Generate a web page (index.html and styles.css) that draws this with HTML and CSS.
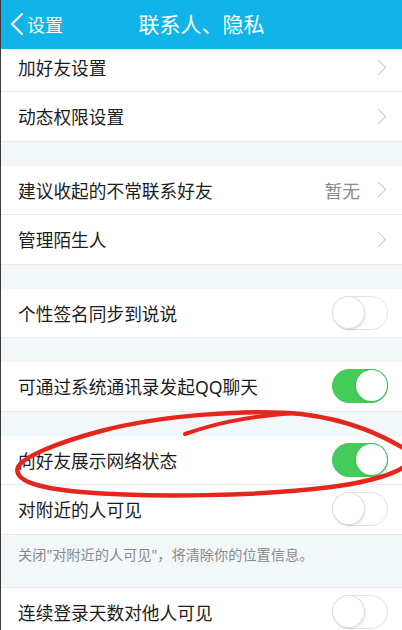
FILE: index.html
```html
<!DOCTYPE html>
<html lang="zh-CN">
<head>
<meta charset="utf-8">
<title>联系人、隐私</title>
<link rel="stylesheet" href="styles.css">
</head>
<body>
<div class="page">
  <header class="navbar">
    <div class="back">
      <svg class="back-icon" width="14" height="22" viewBox="0 0 14 22"><path d="M12 1 L2 11 L12 21" fill="none" stroke="#fff" stroke-width="2.2" stroke-linecap="round" stroke-linejoin="round"/></svg>
      <span>设置</span>
    </div>
    <div class="title">联系人、隐私</div>
  </header>

  <div class="list">
    <div class="row row-partial"><span class="label">加好友设置</span><span class="chev"></span></div>
    <div class="row"><span class="label">动态权限设置</span><span class="chev"></span></div>
    <div class="gap"></div>
    <div class="row"><span class="label">建议收起的不常联系好友</span><span class="value">暂无</span><span class="chev"></span></div>
    <div class="row"><span class="label">管理陌生人</span><span class="chev"></span></div>
    <div class="gap"></div>
    <div class="row"><span class="label">个性签名同步到说说</span><span class="switch"></span></div>
    <div class="gap"></div>
    <div class="row"><span class="label">可通过系统通讯录发起QQ聊天</span><span class="switch on"></span></div>
    <div class="gap"></div>
    <div class="row"><span class="label">向好友展示网络状态</span><span class="switch on"></span></div>
    <div class="row"><span class="label">对附近的人可见</span><span class="switch"></span></div>
    <div class="note">关闭"对附近的人可见"，将清除你的位置信息。</div>
    <div class="row"><span class="label">连续登录天数对他人可见</span><span class="switch"></span></div>
  </div>

  <svg class="scribble" width="402" height="630" viewBox="0 0 402 630">
    <path d="M 404 449 C 382 436, 350 420, 300 414 C 250 409, 160 415, 100 431 C 55 443, 22 457, 17 467 C 12 480, 35 488, 80 492 C 150 498, 260 496, 330 487 C 370 482, 395 473, 404 466" fill="none" stroke="#e5261c" stroke-width="4.5" stroke-linecap="round"/>
    <path d="M 184 434 C 210 425, 240 417, 292 413" fill="none" stroke="#e5261c" stroke-width="4" stroke-linecap="round"/>
  </svg>
</div>
</body>
</html>
```
FILE: styles.css
```css
* { box-sizing: border-box; }
html, body { margin: 0; padding: 0; }
body {
  background: #f2f7fa;
  font-family: "Noto Sans", "Noto Sans CJK SC", sans-serif;
  color: #1c1c1c;
}
.page {
  position: relative;
  width: 402px;
  height: 630px;
  overflow: hidden;
  background: #f2f7fa;
  border-left: 1px solid #3a3a3a;
}
.navbar {
  height: 49px;
  background: #10b4e9;
  color: #fff;
  display: grid;
  grid-template-columns: 1fr auto 1fr;
  align-items: center;
}
.back {
  display: flex;
  align-items: center;
  gap: 3px;
  padding-left: 9px;
  font-size: 18px;
  margin-top: -2px;
}
.title {
  font-size: 21px;
  margin-top: -4px;
}
.list { display: flex; flex-direction: column; }
.row {
  height: 49.5px;
  background: #fff;
  border-bottom: 1px solid #e6eaed;
  display: flex;
  align-items: center;
  padding: 0 14px 0 17px;
  font-size: 17.7px;
}
.row-partial {
  height: 43px;
  padding-bottom: 6px;
}
.label { flex: 1; }
.value {
  color: #8a8a8a;
  margin-right: 13px;
}
.chev {
  width: 11px;
  height: 11px;
  border-top: 1.5px solid #c8c8cc;
  border-right: 1.5px solid #c8c8cc;
  transform: rotate(45deg);
  margin-right: 4px;
}
.gap { height: 24px; }
.note {
  height: 53px;
  padding: 9px 0 0 17px;
  font-size: 14.2px;
  color: #8a8a8a;
  border-bottom: 1px solid #e6eaed;
}
.switch {
  position: relative;
  width: 56px;
  height: 34px;
  border-radius: 17px;
  border: 1.5px solid #e3e3e3;
  background: #fff;
}
.switch::after {
  content: "";
  position: absolute;
  top: 0;
  left: 0;
  width: 31px;
  height: 31px;
  border-radius: 50%;
  background: #fff;
  box-shadow: 0 0 0 1px #dedede, 1px 2px 3px rgba(0,0,0,0.12);
}
.switch.on {
  background: #45cb5a;
  border-color: #45cb5a;
}
.switch.on::after {
  left: auto;
  right: 0;
  box-shadow: 0 0 0 1px #3fbe54, 0 1px 2px rgba(0,0,0,0.1);
}
.scribble {
  position: absolute;
  top: 0;
  left: 0;
  pointer-events: none;
}
```
